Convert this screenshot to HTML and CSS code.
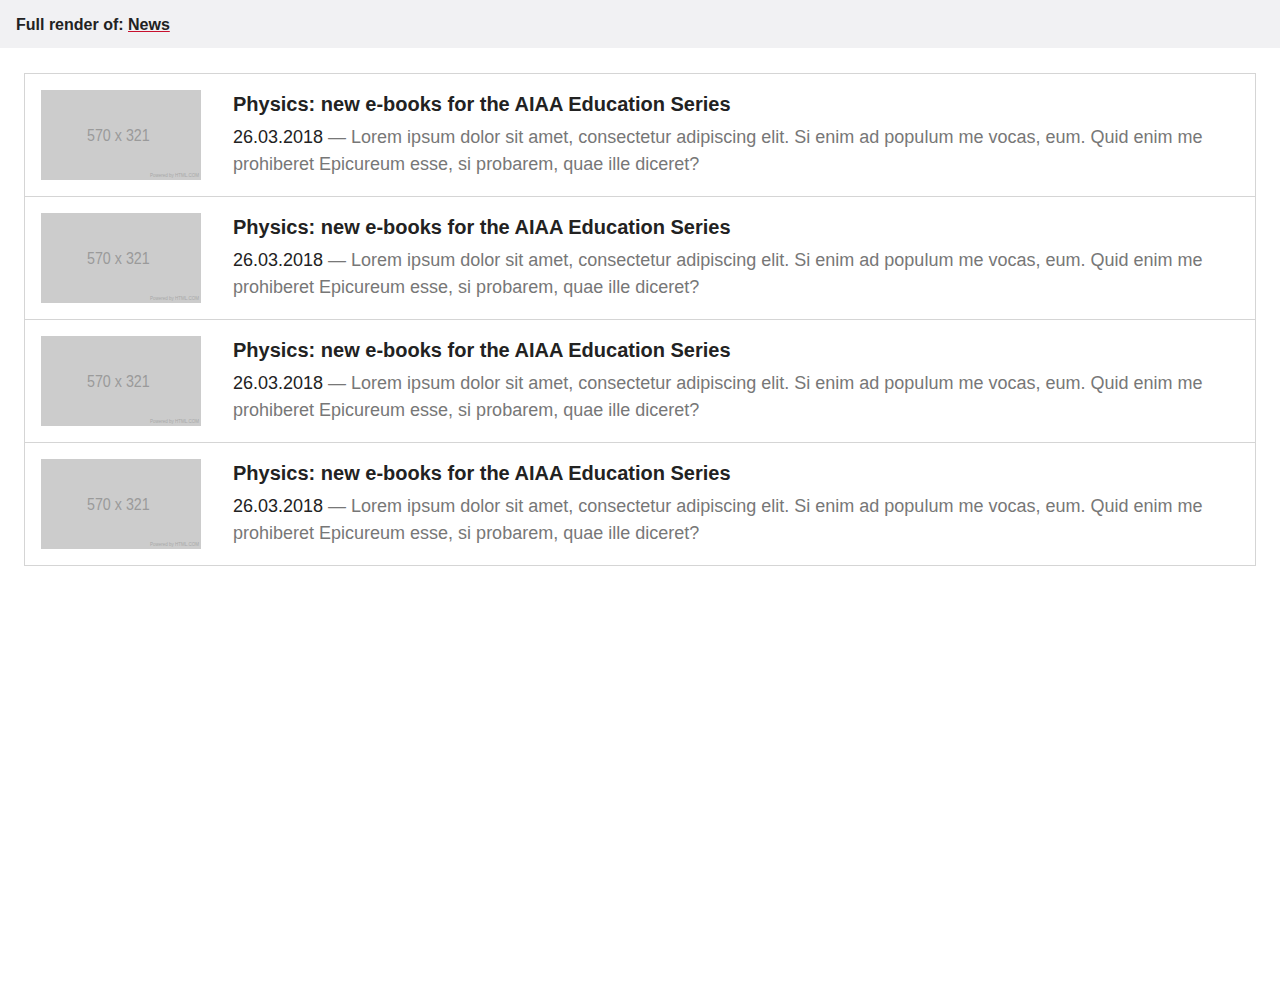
FILE: index.html
```html
<!DOCTYPE html>
<html lang="en">
<head>
<meta charset="utf-8">
<title>News</title>
<link rel="stylesheet" href="styles.css">
</head>
<body>
<header class="topbar"><span>Full render of: <a href="#" class="topbar-link">News</a></span></header>
<main class="page">
  <ul class="news-list">
    <li class="news-item">
      <div class="thumb"><span class="thumb-size">570 x 321</span><span class="thumb-credit">Powered by HTML.COM</span></div>
      <div class="news-body">
        <h3 class="news-title">Physics: new e-books for the AIAA Education Series</h3>
        <p class="news-text"><span class="news-date">26.03.2018</span> — Lorem ipsum dolor sit amet, consectetur adipiscing elit. Si enim ad populum me vocas, eum. Quid enim me prohiberet Epicureum esse, si probarem, quae ille diceret?</p>
      </div>
    </li>
    <li class="news-item">
      <div class="thumb"><span class="thumb-size">570 x 321</span><span class="thumb-credit">Powered by HTML.COM</span></div>
      <div class="news-body">
        <h3 class="news-title">Physics: new e-books for the AIAA Education Series</h3>
        <p class="news-text"><span class="news-date">26.03.2018</span> — Lorem ipsum dolor sit amet, consectetur adipiscing elit. Si enim ad populum me vocas, eum. Quid enim me prohiberet Epicureum esse, si probarem, quae ille diceret?</p>
      </div>
    </li>
    <li class="news-item">
      <div class="thumb"><span class="thumb-size">570 x 321</span><span class="thumb-credit">Powered by HTML.COM</span></div>
      <div class="news-body">
        <h3 class="news-title">Physics: new e-books for the AIAA Education Series</h3>
        <p class="news-text"><span class="news-date">26.03.2018</span> — Lorem ipsum dolor sit amet, consectetur adipiscing elit. Si enim ad populum me vocas, eum. Quid enim me prohiberet Epicureum esse, si probarem, quae ille diceret?</p>
      </div>
    </li>
    <li class="news-item">
      <div class="thumb"><span class="thumb-size">570 x 321</span><span class="thumb-credit">Powered by HTML.COM</span></div>
      <div class="news-body">
        <h3 class="news-title">Physics: new e-books for the AIAA Education Series</h3>
        <p class="news-text"><span class="news-date">26.03.2018</span> — Lorem ipsum dolor sit amet, consectetur adipiscing elit. Si enim ad populum me vocas, eum. Quid enim me prohiberet Epicureum esse, si probarem, quae ille diceret?</p>
      </div>
    </li>
  </ul>
</main>
</body>
</html>
```
FILE: styles.css
```css
* { box-sizing: border-box; }
body {
  margin: 0;
  font-family: "Liberation Sans", Arial, sans-serif;
  color: #222;
  background: #fff;
}
.topbar {
  height: 48px;
  background: #f1f1f3;
  padding: 2px 16px 0;
  display: flex;
  align-items: center;
  font-size: 16px;
  font-weight: bold;
  color: #222;
}
.topbar-link {
  color: #222;
  text-decoration: underline;
  text-decoration-color: #c8102e;
}
.page {
  padding: 25px 24px;
}
.news-list {
  list-style: none;
  margin: 0;
  padding: 0;
  border: 1px solid #d5d5d5;
}
.news-item {
  display: flex;
  gap: 32px;
  padding: 16px;
  border-top: 1px solid #d5d5d5;
  height: 123px;
}
.news-item:first-child {
  border-top: 0;
  height: 122px;
}
.thumb {
  position: relative;
  flex: 0 0 160px;
  height: 90px;
  background: #cccccc;
  display: flex;
  align-items: center;
  justify-content: center;
}
.thumb-size {
  font-size: 17px;
  color: #9a9a9a;
  margin-left: -5px;
  margin-top: 1px;
  transform: scaleX(0.84);
}
.thumb-credit {
  position: absolute;
  right: 2px;
  bottom: 2px;
  font-size: 4.5px;
  line-height: 5px;
  color: #a8a8a8;
}
.news-body {
  flex: 1;
  min-width: 0;
}
.news-title {
  margin: 0;
  font-size: 20px;
  line-height: 28px;
  font-weight: bold;
  color: #222;
}
.news-text {
  margin: 6px 0 0;
  font-size: 18px;
  line-height: 27px;
  color: #777;
}
.news-date {
  color: #222;
}
```
